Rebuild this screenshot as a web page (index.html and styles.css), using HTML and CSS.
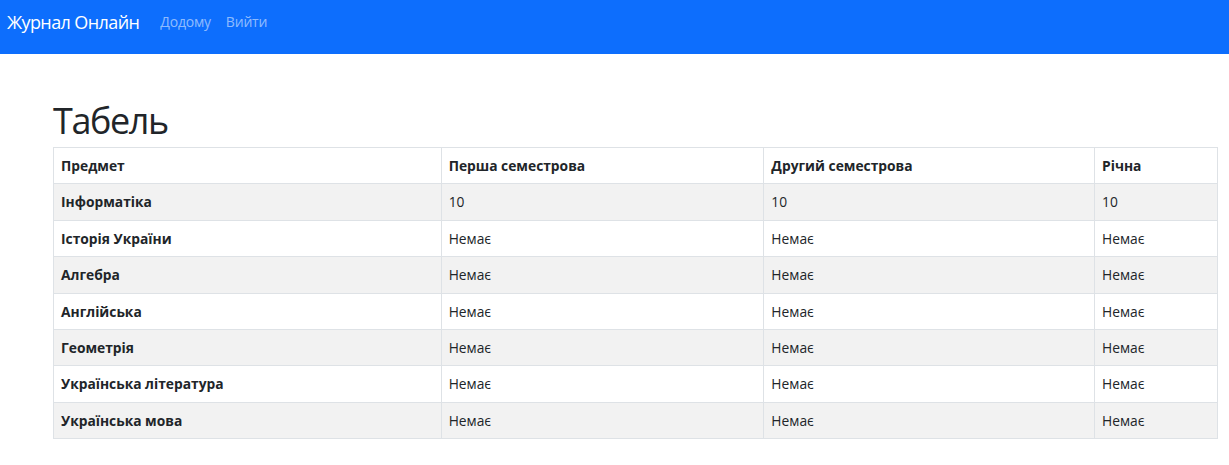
FILE: index.html
```html
<!DOCTYPE html>
<html lang="uk">
<head>
<meta charset="utf-8">
<title>Табель</title>
<link rel="stylesheet" href="styles.css">
</head>
<body>
<nav class="navbar">
  <a class="brand" href="#">Журнал Онлайн</a>
  <a class="nav-link" href="#">Додому</a>
  <a class="nav-link" href="#">Вийти</a>
</nav>
<main class="container">
  <h1 class="title">Табель</h1>
  <table class="grades">
    <colgroup>
      <col class="c1"><col class="c2"><col class="c3"><col class="c4">
    </colgroup>
    <thead>
      <tr><th>Предмет</th><th>Перша семестрова</th><th>Другий семестрова</th><th>Річна</th></tr>
    </thead>
    <tbody>
      <tr><th>Інформатіка</th><td>10</td><td>10</td><td>10</td></tr>
      <tr><th>Історія України</th><td>Немає</td><td>Немає</td><td>Немає</td></tr>
      <tr><th>Алгебра</th><td>Немає</td><td>Немає</td><td>Немає</td></tr>
      <tr><th>Англійська</th><td>Немає</td><td>Немає</td><td>Немає</td></tr>
      <tr><th>Геометрія</th><td>Немає</td><td>Немає</td><td>Немає</td></tr>
      <tr><th>Українська література</th><td>Немає</td><td>Немає</td><td>Немає</td></tr>
      <tr><th>Українська мова</th><td>Немає</td><td>Немає</td><td>Немає</td></tr>
    </tbody>
  </table>
</main>
</body>
</html>
```

FILE: styles.css
```css
html, body {
  margin: 0;
  padding: 0;
  background: #fff;
  color: #212529;
  font-family: "Open Sans", "Noto Sans", sans-serif;
}

.navbar {
  height: 54px;
  box-sizing: border-box;
  background: #0d6efd;
  display: flex;
  align-items: flex-start;
  padding: 7px 0 0 7px;
}

.brand {
  color: #fff;
  text-decoration: none;
  font-size: 18px;
  letter-spacing: -0.6px;
  line-height: 30px;
  margin-right: 21px;
}

.nav-link {
  color: rgba(255, 255, 255, 0.55);
  text-decoration: none;
  font-size: 14px;
  letter-spacing: -0.2px;
  line-height: 30px;
  margin-right: 15px;
}

.container {
  padding: 43px 11px 0 53px;
}

.title {
  margin: 0 0 2px;
  font-size: 36px;
  letter-spacing: -1.4px;
  line-height: 48px;
  font-weight: 500;
}

.grades {
  width: 1165px;
  border-collapse: collapse;
  border: 1px solid #dee2e6;
  font-size: 13.8px;
  line-height: 19.4px;
}

.c1 { width: 388px; }
.c2 { width: 323px; }
.c3 { width: 331px; }
.c4 { width: 123px; }

.grades th,
.grades td {
  border: 1px solid #dee2e6;
  padding: 8px 7px;
  text-align: left;
  vertical-align: top;
}

.grades th {
  font-weight: 700;
}

.grades td {
  font-weight: 400;
}

.grades tbody tr:nth-child(odd) {
  background: #f2f2f2;
}
```
